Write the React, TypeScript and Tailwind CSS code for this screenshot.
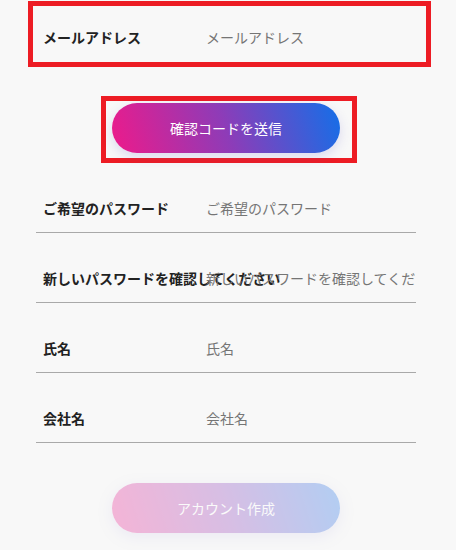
import React from 'react'

const font = { fontFamily: '"Noto Sans CJK JP", "Noto Sans", sans-serif' }

interface FieldProps {
    label: string
    placeholder: string
    boxed?: boolean
}

function Field({ label, placeholder, boxed }: FieldProps) {
    return (
        <div
            className={`flex items-center h-[48px] w-[380px] pl-[7px] ${boxed ? '' : 'ml-[36px] mt-[22px] border-b border-[#a9a9a9]'}`}
        >
            <label className="w-[164px] shrink-0 whitespace-nowrap text-[14px] font-bold text-[#222]">
                {label}
            </label>
            <input
                className="min-w-0 flex-1 bg-transparent text-[14px] text-[#333] outline-none placeholder:text-[#757575] -ml-px"
                placeholder={placeholder}
                style={font}
            />
        </div>
    )
}

export default function App() {
    return (
        <div className="min-h-[550px] bg-[#f8f8f8] pt-px" style={font}>
            <div className="ml-[28px] w-[403px] h-[66px] border-[5px] border-[#ed1c24] pt-[7px] pl-[3px]">
                <Field label="メールアドレス" placeholder="メールアドレス" boxed />
            </div>

            <div className="ml-[101px] mt-[29px] w-[256px] h-[67px] border-[5px] border-[#ed1c24]">
                <button
                    className="ml-[6px] mt-[2px] w-[228px] h-[50px] rounded-full bg-[linear-gradient(72deg,#ee1a8a,#8d3cb8_50%,#136fe8)] text-[14px] text-white shadow-[0_4px_12px_rgba(90,80,200,0.18)]"
                    style={font}
                >
                    確認コードを送信
                </button>
            </div>

            <Field label="ご希望のパスワード" placeholder="ご希望のパスワード" />
            <Field label="新しいパスワードを確認してください" placeholder="新しいパスワードを確認してください" />
            <Field label="氏名" placeholder="氏名" />
            <Field label="会社名" placeholder="会社名" />

            <button
                className="ml-[112px] mt-[40px] w-[228px] h-[50px] rounded-full bg-[linear-gradient(72deg,#ee1a8a,#8d3cb8_50%,#136fe8)] text-[14px] text-white opacity-30 shadow-[0_4px_14px_rgba(90,80,200,0.25)]"
                style={font}
            >
                アカウント作成
            </button>
        </div>
    )
}
